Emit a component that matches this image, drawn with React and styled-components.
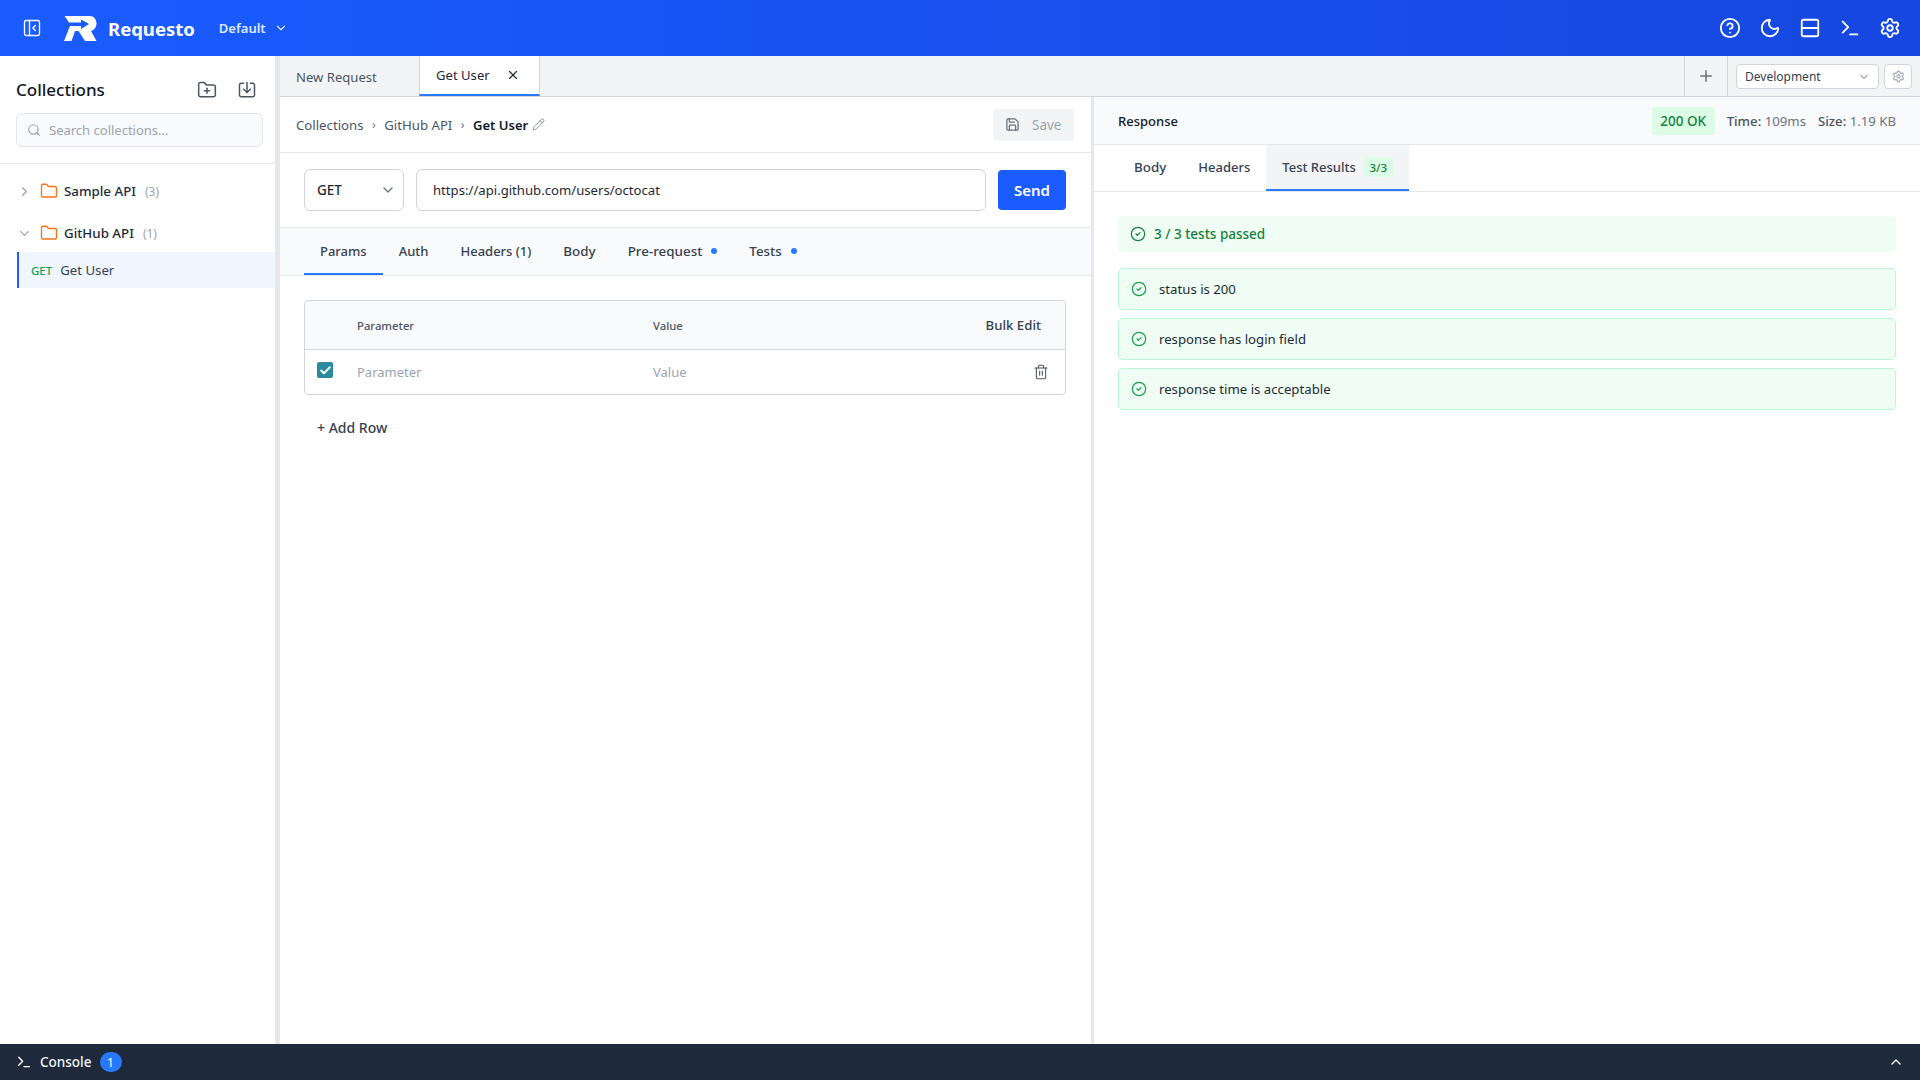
import React from "react";
import styled, { createGlobalStyle } from "styled-components";
import {
  Check,
  ChevronDown,
  ChevronRight,
  ChevronUp,
  CircleCheck,
  CircleHelp,
  Folder,
  FolderPlus,
  Moon,
  PanelLeftClose,
  Pencil,
  Plus,
  Rows2,
  Save,
  Search,
  Settings,
  Terminal,
  Trash2,
  X,
} from "lucide-react";

const GlobalStyle = createGlobalStyle`
  * { box-sizing: border-box; }
  html, body { margin: 0; height: 100%; }
  body {
    font-family: "Noto Sans", "Open Sans", sans-serif;
    color: #1f2937;
    background: #fff;
  }
`;

const Page = styled.div`
  display: flex;
  flex-direction: column;
  width: 1920px;
  height: 1080px;
  overflow: hidden;
`;

const Header = styled.header`
  flex: 0 0 56px;
  display: flex;
  align-items: center;
  padding: 0 19px 0 22px;
  color: #fff;
  background: linear-gradient(90deg, #1a5cff 0%, #1647e0 100%);
`;

const IconButton = styled.button`
  display: flex;
  align-items: center;
  justify-content: center;
  padding: 0;
  border: 0;
  background: none;
  color: inherit;
`;

const Logo = styled.svg`
  width: 33px;
  height: 27px;
  margin-left: 22px;
`;

const Brand = styled.div`
  margin-left: 11px;
  font-size: 18.5px;
  font-weight: 700;
`;

const Workspace = styled.div`
  display: flex;
  align-items: center;
  gap: 8px;
  margin-left: 24px;
  font-size: 13px;
  font-weight: 600;
  color: #dbeafe;
`;

const HeaderActions = styled.div`
  display: flex;
  align-items: center;
  gap: 18px;
  margin-left: auto;
`;

const Body = styled.div`
  flex: 1;
  display: flex;
  min-height: 0;
`;

const Sidebar = styled.aside`
  flex: 0 0 275px;
  display: flex;
  flex-direction: column;
`;

const SidebarTop = styled.div`
  padding: 20px 12px 16px 16px;
  border-bottom: 1px solid #e5e7eb;
`;

const SidebarTitleRow = styled.div`
  display: flex;
  align-items: center;
  justify-content: space-between;
  height: 28px;
  padding-right: 6px;
  margin-bottom: 9px;
`;

const SidebarTitle = styled.h2`
  margin: -2px 0 0;
  font-size: 17px;
  font-weight: 500;
  color: #111827;
`;

const SidebarActions = styled.div`
  display: flex;
  gap: 20px;
  margin-top: -1px;
  color: #4b5563;
`;

const SearchBox = styled.div`
  display: flex;
  align-items: center;
  gap: 8px;
  height: 34px;
  padding: 0 10px;
  border: 1px solid #e5e7eb;
  border-radius: 6px;
  background: #f9fafb;
  font-size: 13px;
  color: #9ca3af;
`;

const Tree = styled.div`
  display: flex;
  flex-direction: column;
  padding-top: 6px;
`;

const FolderRow = styled.div`
  display: flex;
  align-items: center;
  height: 42px;
  padding-left: 17px;
  font-size: 13.3px;
  font-weight: 500;
  color: #1f2937;
  svg.chev { color: #9ca3af; }
  svg.folder { color: #f97316; margin-left: 8px; }
`;

const FolderName = styled.span`
  margin-left: 6px;
`;

const FolderCount = styled.span`
  margin-left: 9px;
  font-size: 12px;
  font-weight: 400;
  color: #9ca3af;
`;

const RequestRow = styled.div`
  display: flex;
  align-items: center;
  gap: 8px;
  height: 36px;
  margin: -2px 0 0 17px;
  padding-left: 12px;
  border-left: 2px solid #1a5cff;
  background: #eff6ff;
  font-size: 13.2px;
  color: #374151;
`;

const MethodTag = styled.span`
  font-size: 11.5px;
  font-weight: 500;
  color: #16a34a;
`;

const Splitter = styled.div`
  flex: 0 0 ${(p) => p.$w}px;
  background: #e5e7eb;
`;

const Main = styled.main`
  flex: 1;
  display: flex;
  flex-direction: column;
  min-width: 0;
`;

const TabBar = styled.div`
  flex: 0 0 41px;
  display: flex;
  background: #f3f4f6;
  border-bottom: 1px solid #d1d5db;
`;

const FileTab = styled.div`
  display: flex;
  align-items: center;
  justify-content: ${(p) => (p.$active ? "space-between" : "flex-start")};
  width: ${(p) => (p.$active ? 121 : 139)}px;
  height: 40px;
  padding: ${(p) => (p.$active ? "0 19px 1px 16px" : "1px 16px 0")};
  font-size: 13.1px;
  color: ${(p) => (p.$active ? "#1f2937" : "#4b5563")};
  background: ${(p) => (p.$active ? "#fff" : "transparent")};
  border-left: ${(p) => (p.$active ? "1px solid #d1d5db" : "0")};
  border-right: ${(p) => (p.$active ? "1px solid #d1d5db" : "0")};
  border-bottom: ${(p) => (p.$active ? "2px solid #2979ff" : "0")};
`;

const TabBarEnd = styled.div`
  display: flex;
  align-items: center;
  margin-left: auto;
  height: 100%;
`;

const NewTab = styled.div`
  display: flex;
  align-items: center;
  justify-content: center;
  width: 44px;
  height: 100%;
  border-left: 1px solid #d1d5db;
  border-right: 1px solid #d1d5db;
  color: #6b7280;
`;

const EnvSelect = styled.div`
  display: flex;
  align-items: center;
  justify-content: space-between;
  width: 143px;
  height: 25px;
  margin: 1px 0 0 8px;
  padding: 0 8px;
  border: 1px solid #d1d5db;
  border-radius: 4px;
  background: #fff;
  font-size: 12px;
  color: #374151;
  svg { color: #6b7280; }
`;

const EnvGear = styled.div`
  display: flex;
  align-items: center;
  justify-content: center;
  width: 28px;
  height: 25px;
  margin: 1px 8px 0 5px;
  border: 1px solid #d1d5db;
  border-radius: 4px;
  background: #fff;
  color: #9ca3af;
`;

const Panels = styled.div`
  flex: 1;
  display: flex;
  min-height: 0;
`;

const RequestPanel = styled.section`
  flex: 0 0 811px;
  display: flex;
  flex-direction: column;
`;

const Breadcrumbs = styled.div`
  flex: 0 0 56px;
  display: flex;
  align-items: center;
  padding: 0 17px 0 16px;
  border-bottom: 1px solid #e5e7eb;
  font-size: 13.2px;
  color: #4b5563;
`;

const Crumb = styled.span`
  font-weight: ${(p) => (p.$current ? 600 : 400)};
  font-size: ${(p) => (p.$current ? "13px" : "13.2px")};
  color: ${(p) => (p.$current ? "#111827" : "#4b5563")};
`;

const CrumbSep = styled.span`
  margin: 0 8.5px;
  font-size: 12px;
  color: #6b7280;
`;

const EditIcon = styled(Pencil)`
  margin-left: 4px;
  color: #6b7280;
`;

const SaveButton = styled.div`
  display: flex;
  align-items: center;
  gap: 12px;
  width: 81px;
  height: 32px;
  margin-left: auto;
  padding-left: 12px;
  border-radius: 4px;
  background: #f3f4f6;
  font-size: 13.5px;
  color: #9ca3af;
  svg { color: #6b7280; }
`;

const UrlRow = styled.div`
  flex: 0 0 75px;
  display: flex;
  align-items: center;
  padding: 0 25px 0 24px;
  border-bottom: 1px solid #e5e7eb;
`;

const MethodSelect = styled.div`
  display: flex;
  align-items: center;
  justify-content: space-between;
  width: 100px;
  height: 42px;
  padding: 0 7px 0 12px;
  border: 1px solid #d1d5db;
  border-radius: 6px;
  font-size: 13.5px;
  font-weight: 500;
  svg { color: #6b7280; }
`;

const UrlInput = styled.div`
  display: flex;
  align-items: center;
  flex: 1;
  height: 42px;
  margin: 0 12px;
  padding: 0 16px;
  border: 1px solid #d1d5db;
  border-radius: 6px;
  font-size: 13.15px;
  color: #1f2937;
`;

const SendButton = styled.div`
  display: flex;
  align-items: center;
  justify-content: center;
  width: 68px;
  height: 40px;
  border-radius: 4px;
  background: #1a5cff;
  color: #fff;
  font-size: 15px;
  font-weight: 600;
`;

const RequestTabs = styled.div`
  flex: 0 0 48px;
  display: flex;
  padding-left: 24px;
  background: #f9fafb;
  border-bottom: 1px solid #e5e7eb;
`;

const RequestTab = styled.div`
  display: flex;
  align-items: center;
  gap: 9px;
  padding: 0 16px;
  height: 47px;
  font-size: ${(p) => p.$size || 13}px;
  font-weight: 500;
  color: #374151;
  border-bottom: 2px solid ${(p) => (p.$active ? "#2979ff" : "transparent")};
`;

const Dot = styled.span`
  width: 6px;
  height: 6px;
  border-radius: 50%;
  background: #2979ff;
`;

const ParamsArea = styled.div`
  padding: 24px 25px 0 24px;
`;

const ParamsTable = styled.div`
  border: 1px solid #d1d5db;
  border-radius: 4px;
`;

const ParamsRow = styled.div`
  display: grid;
  grid-template-columns: 52px 296px 1fr auto;
  align-items: center;
  height: ${(p) => (p.$head ? 49 : 44)}px;
  background: ${(p) => (p.$head ? "#f9fafb" : "#fff")};
  border-bottom: ${(p) => (p.$head ? "1px solid #d1d5db" : "0")};
  border-radius: ${(p) => (p.$head ? "4px 4px 0 0" : "0 0 4px 4px")};
`;

const HeadCell = styled.div`
  font-size: 11.3px;
  font-weight: 500;
  color: #4b5563;
`;

const BulkEdit = styled.div`
  padding-right: 24px;
  font-size: 13.2px;
  font-weight: 500;
  color: #374151;
`;

const PlaceholderCell = styled.div`
  font-size: 13px;
  color: #9ca3af;
`;

const CheckBox = styled.div`
  display: flex;
  align-items: center;
  justify-content: center;
  width: 16px;
  height: 16px;
  margin: -4px 0 0 12px;
  border-radius: 2px;
  background: #2a8a9f;
  color: #fff;
`;

const TrashCell = styled.div`
  padding-right: 16px;
  color: #4b5563;
  display: flex;
`;

const AddRow = styled.div`
  margin: 23px 0 0 13px;
  font-size: 14px;
  font-weight: 500;
  color: #374151;
`;

const ResponsePanel = styled.section`
  flex: 1;
  display: flex;
  flex-direction: column;
  min-width: 0;
`;

const ResponseHead = styled.div`
  flex: 0 0 48px;
  display: flex;
  align-items: center;
  padding: 0 24px;
  background: #f9fafb;
  border-bottom: 1px solid #e5e7eb;
`;

const ResponseTitle = styled.div`
  font-size: 13px;
  font-weight: 500;
  color: #111827;
`;

const StatusBadge = styled.div`
  display: flex;
  align-items: center;
  justify-content: center;
  width: 63px;
  height: 28px;
  margin-left: auto;
  border-radius: 3px;
  background: #dcfce7;
  font-size: 13.5px;
  font-weight: 500;
  color: #15803d;
`;

const Meta = styled.div`
  margin-left: 12px;
  font-size: 13.2px;
  color: #6b7280;
  b { font-weight: 500; color: #4b5563; }
`;

const ResponseTabs = styled.div`
  flex: 0 0 47px;
  display: flex;
  padding-left: 24px;
  border-bottom: 1px solid #e5e7eb;
`;

const ResponseTab = styled.div`
  display: flex;
  align-items: center;
  gap: 8px;
  padding: 0 16px;
  height: 46px;
  font-size: ${(p) => p.$size || 13}px;
  font-weight: 500;
  color: #374151;
  background: ${(p) => (p.$active ? "#f3f4f6" : "transparent")};
  border-bottom: 2px solid ${(p) => (p.$active ? "#2979ff" : "transparent")};
`;

const CountBadge = styled.span`
  display: flex;
  align-items: center;
  justify-content: center;
  width: 29px;
  height: 20px;
  border-radius: 3px;
  background: #dcfce7;
  font-size: 11.5px;
  color: #15803d;
`;

const Results = styled.div`
  display: flex;
  flex-direction: column;
  gap: 8px;
  padding: 24px 24px 0;
`;

const Summary = styled.div`
  display: flex;
  align-items: center;
  gap: 8px;
  height: 36px;
  margin-bottom: 8px;
  padding: 0 12px;
  border-radius: 5px;
  background: #f0fdf4;
  font-size: 13.5px;
  font-weight: 500;
  color: #15803d;
`;

const ResultRow = styled.div`
  display: flex;
  align-items: center;
  gap: 12px;
  height: 42px;
  padding: 0 12px;
  border: 1px solid #bbf7d0;
  border-radius: 5px;
  background: #f0fdf4;
  font-size: 13.2px;
  color: #1f2937;
  svg { color: #16a34a; }
`;

const Footer = styled.footer`
  flex: 0 0 36px;
  display: flex;
  align-items: center;
  padding: 0 16px;
  background: #1e293b;
  color: #fff;
`;

const FooterLabel = styled.span`
  margin-left: 8px;
  font-size: 13.5px;
  font-weight: 500;
  color: #f1f5f9;
`;

const FooterBadge = styled.span`
  display: flex;
  align-items: center;
  justify-content: center;
  width: 22px;
  height: 20px;
  margin-left: 8px;
  border-radius: 10px;
  background: #2979ff;
  font-size: 12px;
`;

const FooterToggle = styled.div`
  display: flex;
  margin-left: auto;
`;

const ImportIcon = () => (
  <svg width="20" height="20" viewBox="0 0 24 24" fill="none" stroke="currentColor" strokeWidth="1.8" strokeLinecap="round" strokeLinejoin="round">
    <path d="M8 4H5a2 2 0 0 0-2 2v12a2 2 0 0 0 2 2h14a2 2 0 0 0 2-2V6a2 2 0 0 0-2-2h-3" />
    <path d="M12 3v12" />
    <path d="m8 11 4 4 4-4" />
  </svg>
);

const tests = ["status is 200", "response has login field", "response time is acceptable"];

export default function App() {
  return (
    <Page>
      <GlobalStyle />
      <Header>
        <IconButton>
          <PanelLeftClose size={20} strokeWidth={1.6} />
        </IconButton>
        <Logo viewBox="0 0 33 27">
          <path
            fill="#fff"
            d="M.5 1H25.5C30 1 32.5 4.5 32.5 8.5C32.5 12.5 30 15 27 16L32.5 26H21L14.5 16H11L7.5 26H0L6 11H17V14L25 9L17 4.5V7.5H5Z"
          />
        </Logo>
        <Brand>Requesto</Brand>
        <Workspace>
          Default
          <ChevronDown size={14} />
        </Workspace>
        <HeaderActions>
          <IconButton><CircleHelp size={22} strokeWidth={2} /></IconButton>
          <IconButton><Moon size={22} strokeWidth={2} /></IconButton>
          <IconButton><Rows2 size={22} strokeWidth={2} /></IconButton>
          <IconButton><Terminal size={22} strokeWidth={2} /></IconButton>
          <IconButton><Settings size={22} strokeWidth={2} /></IconButton>
        </HeaderActions>
      </Header>
      <Body>
        <Sidebar>
          <SidebarTop>
            <SidebarTitleRow>
              <SidebarTitle>Collections</SidebarTitle>
              <SidebarActions>
                <FolderPlus size={20} strokeWidth={1.8} />
                <ImportIcon />
              </SidebarActions>
            </SidebarTitleRow>
            <SearchBox>
              <Search size={14} />
              Search collections...
            </SearchBox>
          </SidebarTop>
          <Tree>
            <FolderRow>
              <ChevronRight className="chev" size={15} />
              <Folder className="folder" size={18} strokeWidth={1.8} />
              <FolderName>Sample API</FolderName>
              <FolderCount>(3)</FolderCount>
            </FolderRow>
            <FolderRow>
              <ChevronDown className="chev" size={15} />
              <Folder className="folder" size={18} strokeWidth={1.8} />
              <FolderName>GitHub API</FolderName>
              <FolderCount>(1)</FolderCount>
            </FolderRow>
            <RequestRow>
              <MethodTag>GET</MethodTag>
              Get User
            </RequestRow>
          </Tree>
        </Sidebar>
        <Splitter $w={5} />
        <Main>
          <TabBar>
            <FileTab>New Request</FileTab>
            <FileTab $active>
              Get User
              <X size={14} />
            </FileTab>
            <TabBarEnd>
              <NewTab><Plus size={18} /></NewTab>
              <EnvSelect>
                Development
                <ChevronDown size={12} />
              </EnvSelect>
              <EnvGear><Settings size={13} /></EnvGear>
            </TabBarEnd>
          </TabBar>
          <Panels>
            <RequestPanel>
              <Breadcrumbs>
                <Crumb>Collections</Crumb>
                <CrumbSep>›</CrumbSep>
                <Crumb>GitHub API</Crumb>
                <CrumbSep>›</CrumbSep>
                <Crumb $current>Get User</Crumb>
                <EditIcon size={13} strokeWidth={1.4} />
                <SaveButton>
                  <Save size={15} />
                  Save
                </SaveButton>
              </Breadcrumbs>
              <UrlRow>
                <MethodSelect>
                  GET
                  <ChevronDown size={16} />
                </MethodSelect>
                <UrlInput>https://api.github.com/users/octocat</UrlInput>
                <SendButton>Send</SendButton>
              </UrlRow>
              <RequestTabs>
                <RequestTab $active>Params</RequestTab>
                <RequestTab>Auth</RequestTab>
                <RequestTab>Headers (1)</RequestTab>
                <RequestTab $size={13.4}>Body</RequestTab>
                <RequestTab $size={13.4}>Pre-request<Dot /></RequestTab>
                <RequestTab $size={13.4}>Tests<Dot /></RequestTab>
              </RequestTabs>
              <ParamsArea>
                <ParamsTable>
                  <ParamsRow $head>
                    <span />
                    <HeadCell>Parameter</HeadCell>
                    <HeadCell>Value</HeadCell>
                    <BulkEdit>Bulk Edit</BulkEdit>
                  </ParamsRow>
                  <ParamsRow>
                    <CheckBox><Check size={13} strokeWidth={3.5} /></CheckBox>
                    <PlaceholderCell>Parameter</PlaceholderCell>
                    <PlaceholderCell>Value</PlaceholderCell>
                    <TrashCell><Trash2 size={16} strokeWidth={1.6} /></TrashCell>
                  </ParamsRow>
                </ParamsTable>
                <AddRow>+ Add Row</AddRow>
              </ParamsArea>
            </RequestPanel>
            <Splitter $w={3} />
            <ResponsePanel>
              <ResponseHead>
                <ResponseTitle>Response</ResponseTitle>
                <StatusBadge>200 OK</StatusBadge>
                <Meta><b>Time:</b> 109ms</Meta>
                <Meta><b>Size:</b> 1.19 KB</Meta>
              </ResponseHead>
              <ResponseTabs>
                <ResponseTab $size={13.4}>Body</ResponseTab>
                <ResponseTab>Headers</ResponseTab>
                <ResponseTab $active>
                  Test Results
                  <CountBadge>3/3</CountBadge>
                </ResponseTab>
              </ResponseTabs>
              <Results>
                <Summary>
                  <CircleCheck size={16} strokeWidth={1.8} />
                  3 / 3 tests passed
                </Summary>
                {tests.map((name) => (
                  <ResultRow key={name}>
                    <CircleCheck size={16} strokeWidth={1.8} />
                    {name}
                  </ResultRow>
                ))}
              </Results>
            </ResponsePanel>
          </Panels>
        </Main>
      </Body>
      <Footer>
        <Terminal size={16} />
        <FooterLabel>Console</FooterLabel>
        <FooterBadge>1</FooterBadge>
        <FooterToggle><ChevronUp size={16} /></FooterToggle>
      </Footer>
    </Page>
  );
}
